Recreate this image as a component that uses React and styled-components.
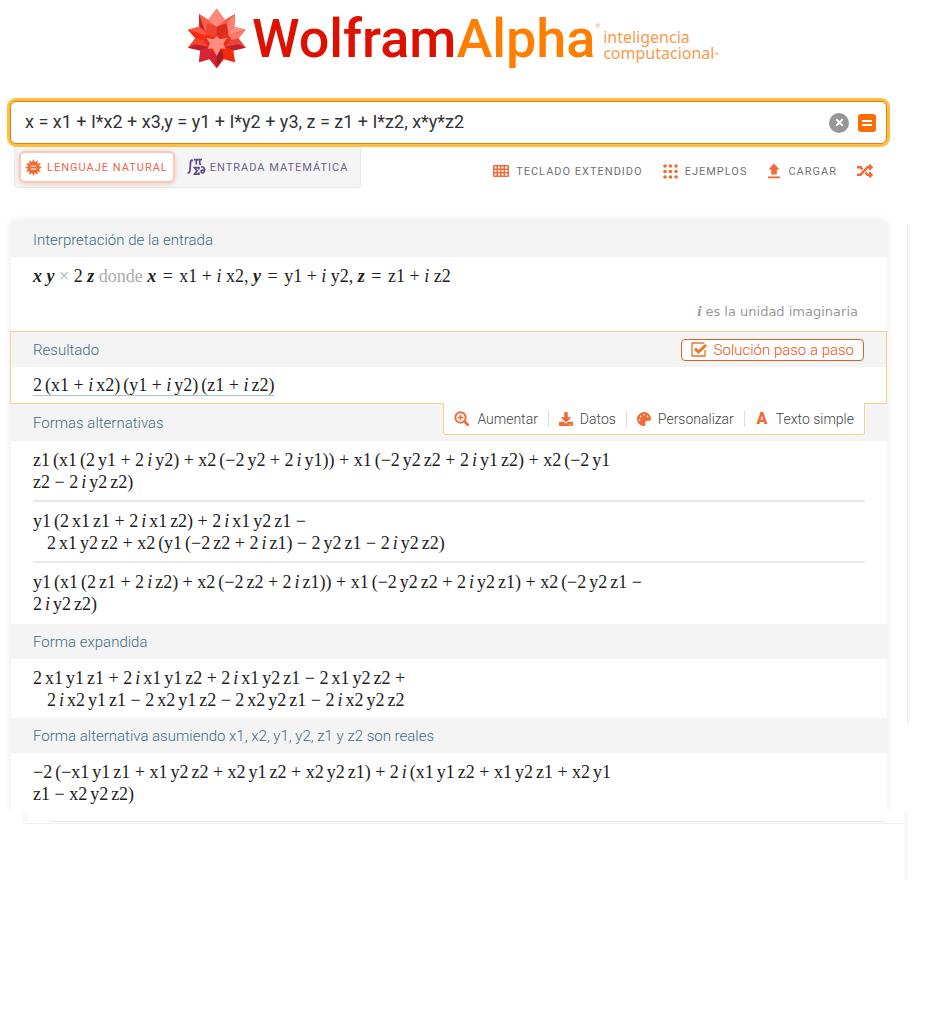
import React from "react";
import styled, { createGlobalStyle, css } from "styled-components";
import { FaRandom, FaDownload, FaPalette, FaTimes } from "react-icons/fa";

const orange = "#f26a35";
const sans = `Roboto, "Liberation Sans", sans-serif`;

const GlobalStyle = createGlobalStyle`
  *, *::before, *::after { box-sizing: border-box; }
  body { margin: 0; background: #fff; font-family: ${sans}; color: #333; }
  button { font: inherit; border: 0; background: none; padding: 0; cursor: pointer; }
`;

const Page = styled.div`
  display: flex;
  flex-direction: column;
  padding-top: 8px;
`;

const Brand = styled.a`
  display: flex;
  align-items: flex-start;
  align-self: center;
  height: 92px;
  margin-right: 26px;
  text-decoration: none;
`;

const Spikey = styled.svg`
  display: block;
  width: 60px;
  height: 62px;
  margin-right: 5px;
`;

const Wordmark = styled.span`
  font-size: 54px;
  line-height: 62px;
  font-weight: 500;
  color: #dd1100;
`;

const Alpha = styled.span`
  color: #ff7e00;
`;

const Mark = styled.small`
  font-size: 6px;
  font-weight: 400;
  line-height: 8px;
  color: #f79a4d;
  align-self: ${(p) => (p.$low ? "flex-end" : "flex-start")};
  margin: ${(p) => (p.$low ? "0 0 2px" : "14px 0 0")};
`;

const Tagline = styled.span`
  display: flex;
  margin: 21px 0 0 3px;
  font-family: "Noto Sans", "Open Sans", sans-serif;
  font-size: 16px;
  line-height: 16px;
  color: #f79a4d;
`;

const SearchBox = styled.form`
  position: relative;
  z-index: 1;
  display: flex;
  align-items: center;
  height: 43px;
  margin: 1px 45px 0 10px;
  padding: 0 10px 0 14px;
  gap: 9px;
  background: #fff;
  border: 1px solid #e07a20;
  border-radius: 6px;
  box-shadow: 0 0 0 3px #ffbf3a;
`;

const Query = styled.input`
  flex: 1;
  min-width: 0;
  padding: 0 0 2px;
  border: 0;
  outline: 0;
  background: none;
  font-family: ${sans};
  font-size: 18px;
  line-height: 24px;
  color: #333;
`;

const RoundButton = styled.button`
  display: grid;
  place-items: center;
  width: 20px;
  height: 20px;
  border-radius: 50%;
  background: #979797;
  color: #fff;
  font-size: 11px;
`;

const SubmitButton = styled(RoundButton)`
  width: 18px;
  height: 18px;
  border-radius: 3px;
  background: #ff6c00;
`;

const Controls = styled.div`
  display: flex;
  justify-content: space-between;
  align-items: flex-start;
  height: 78px;
  margin: 0 59px 0 14px;
`;

const Tabs = styled.div`
  display: flex;
  align-items: center;
  gap: 12px;
  height: 44px;
  padding: 3px 12px 0 4px;
  background: #f5f5f6;
  border: 1px solid #e8e8e8;
  border-top: 0;
  border-radius: 0 0 4px 4px;
`;

const Tab = styled.button`
  display: flex;
  align-items: center;
  gap: 4px;
  height: 32px;
  font-size: 11px;
  letter-spacing: 1px;
  color: #6c608f;
  white-space: nowrap;
  svg { display: block; }
  ${(p) =>
    p.$active &&
    css`
      gap: 5px;
      padding: 0 5px 0 4px;
      color: #ea6847;
      background: #fff;
      border: 2px solid #f9c9b9;
      border-radius: 6px;
      box-shadow: 0 1px 5px rgba(240, 120, 80, 0.35);
    `}
`;

const Tools = styled.div`
  display: flex;
  align-items: center;
  gap: 20px;
  height: 54px;
`;

const Tool = styled.button`
  display: flex;
  align-items: center;
  gap: 7px;
  font-size: 11px;
  letter-spacing: 1px;
  color: #737373;
  white-space: nowrap;
  svg { display: block; color: ${orange}; }
`;

const Results = styled.div`
  display: flex;
  align-items: flex-start;
`;

const Card = styled.main`
  flex: 1;
  min-width: 0;
  margin-left: 11px;
  border-radius: 5px 5px 0 0;
  background: #fff;
  box-shadow: 0 -2px 8px rgba(0, 0, 0, 0.09);
  clip-path: inset(-12px -9px 0 -9px);
`;

const Rail = styled.aside`
  width: 45px;
  padding: 3px 0 0 20px;
`;

const RailEdge = styled.div`
  width: 4px;
  height: 498px;
  border-left: 1px solid #ececec;
  background: linear-gradient(to right, #f5f5f5, #fff);
`;

const Pod = styled.section`
  position: relative;
  ${(p) =>
    p.$selected &&
    css`
      z-index: 1;
      margin-left: -1px;
      border: 1px solid #f3d58a;
    `}
`;

const PodHeader = styled.header`
  display: flex;
  align-items: center;
  justify-content: space-between;
  min-height: ${(p) => (p.$tall ? "37px" : "35px")};
  padding: 0 22px;
  background: #f4f4f4;
`;

const PodTitle = styled.h2`
  margin: 0;
  font-size: 15px;
  line-height: 20px;
  font-weight: 300;
  color: #3f6c82;
`;

const PodBody = styled.div`
  padding: 8px 22px 7px;
`;

const PodRows = styled.div`
  padding: 0 22px 2px;
`;

const Row = styled.div`
  padding: 8px 0 7px;
  & + & { border-top: 2px solid #e9e9e9; }
`;

const Formula = styled.p`
  width: fit-content;
  margin: 0;
  font-family: "Liberation Serif", "Times New Roman", serif;
  font-size: 18px;
  line-height: 22px;
  color: #1d1d1d;
  white-space: nowrap;
  ${(p) =>
    p.$linked &&
    css`
      line-height: 20px;
      border-bottom: 1px solid #a5c8cd;
    `}
`;

const Line = styled.span`
  display: block;
  padding-left: ${(p) => (p.$indent ? "14px" : "0")};
`;

const Variable = styled.i`
  font-weight: 700;
`;

const Relation = styled.span`
  padding: 0 2px;
`;

const Muted = styled.span`
  color: #aaa;
`;

const Note = styled.p`
  margin: 13px 7px 1px 0;
  font-family: "DejaVu Sans", sans-serif;
  font-size: 13px;
  line-height: 22px;
  text-align: right;
  color: #999;
  i { font-family: "Liberation Serif", serif; font-size: 15px; font-weight: 700; }
`;

const StepButton = styled.button`
  display: flex;
  align-items: center;
  gap: 6px;
  height: 22px;
  padding: 0 9px;
  border: 1px solid #d9622b;
  border-radius: 4px;
  background: #fff;
  font-size: 15px;
  font-weight: 300;
  line-height: 20px;
  color: #ee4f12;
  svg { display: block; }
`;

const PodMenu = styled.div`
  position: absolute;
  top: 100%;
  right: 21px;
  display: flex;
  height: 32px;
  align-items: center;
  background: #fff;
  border: 1px solid #f3d58a;
  border-top: 0;
  border-radius: 0 0 3px 3px;
`;

const MenuButton = styled.button`
  display: flex;
  align-items: center;
  gap: 7px;
  padding: 0 10px;
  font-size: 14px;
  font-weight: 300;
  line-height: 16px;
  color: #444;
  white-space: nowrap;
  & + & { border-left: 1px solid #dcdcdc; }
  svg { display: block; color: ${orange}; }
`;

const LetterIcon = styled.b`
  width: 14px;
  font-size: 16px;
  font-weight: 900;
  color: ${orange};
`;

const Tail = styled.div`
  height: 68px;
  margin: 0 21px 0 22px;
  padding-right: 7px;
  background: linear-gradient(to left, #fff, #f5f5f5 6px, #fff 7px);
`;

const TailEdge = styled.div`
  height: 12px;
  padding: 9px 20px 0 22px;
  background: #fff;
  border-left: 6px solid #fafafa;
  border-bottom: 1px solid #f1f1f1;
`;

const TailRule = styled.div`
  height: 1px;
  background: #e6e6e6;
`;

const TailBody = styled.div`
  height: 56px;
  background: #fff;
`;

// Factors are set with a narrow space, operators keep a full one.
function Expr({ children }) {
  return children
    .replace(/([^+−]) (?=[^+−])/g, "$1\u2006")
    .split(/(\bi\b)/)
    .map((part, n) => (part === "i" ? <i key={n}>i</i> : part));
}

const star = Array.from({ length: 24 }, (_, n) => {
  const r = n % 2 ? 6 : 9;
  const a = (n * Math.PI) / 12;
  return `${9 + r * Math.sin(a)},${9 - r * Math.cos(a)}`;
}).join(" ");

function SpikeyLogo() {
  return (
    <Spikey viewBox="42 22 180 186" aria-hidden="true">
      <polygon fill="#e8301c" points="131,24 156,58 186,40 184,78 218,87 196,113 218,141 180,147 186,185 153,176 131,203 109,176 78,185 82,147 45,141 67,113 45,87 79,78 78,40 106,58" />
      <polygon fill="#ff8a7c" points="131,24 158,62 131,79 104,62" />
      <polygon fill="#c9202c" points="78,40 79,80 97,94 100,70" />
      <polygon fill="#f8604c" points="78,40 106,58 131,79 104,70 97,94" />
      <polygon fill="#f8604c" points="186,40 156,58 131,79 162,70 165,94" />
      <polygon fill="#ff8171" points="186,40 184,78 166,94 162,68" />
      <polygon fill="#ee4433" points="104,68 131,79 131,109 96,101" />
      <polygon fill="#dc2b1c" points="158,68 131,79 131,109 166,101" />
      <polygon fill="#ff5a43" points="45,87 79,78 98,94 96,106" />
      <polygon fill="#f82c0c" points="45,87 96,103 86,120 67,113" />
      <polygon fill="#ff9184" points="218,87 184,78 166,94 166,103" />
      <polygon fill="#ff7868" points="218,87 166,103 178,122 196,113" />
      <polygon fill="#f24530" points="45,141 67,113 91,119 104,137 67,132" />
      <polygon fill="#bd1f2c" points="45,141 67,131 104,139 82,150" />
      <polygon fill="#ee4434" points="218,141 196,113 172,119 158,137 196,132" />
      <polygon fill="#bd1f2c" points="218,141 196,131 158,139 180,150" />
      <polygon fill="#d52536" points="78,185 82,147 108,139 115,172" />
      <polygon fill="#f52b0c" points="186,185 180,147 154,139 147,172" />
      <polygon fill="#d32331" points="131,203 111,169 115,145 131,165" />
      <polygon fill="#a81a27" points="131,203 151,169 147,145 131,165" />
      <polygon fill="#ff8d7f" points="100,112 122,116 131,106 140,116 163,112 151,128 158,145 143,143 131,166 119,143 104,145 111,128" />
    </Spikey>
  );
}

function SunIcon() {
  return (
    <svg width="17" height="17" viewBox="0 0 18 18" aria-hidden="true">
      <polygon points={star} fill={orange} />
      <path d="M6 7.500h6M6 10.500h6" stroke="#ffd9c8" strokeWidth="1.500" />
    </svg>
  );
}

function MathIcon() {
  return (
    <svg width="19" height="18" viewBox="0 0 19 18" fill="none" stroke="#5e4a8c" aria-hidden="true">
      <path d="M6 2.600C4.200 1.600 3.600 3 3.500 5L3 12c-.1 2.400-1 3.400-2.500 2.500" strokeWidth="1.800" />
      <path d="M7 1.700h8M9.300 2v4.500M12.700 2v3.500q0 1 1.500.8" strokeWidth="1.700" />
      <path d="M12 11.500V9.700H7.500l2.500 3-2.500 3.500H12v-1.800" strokeWidth="1.700" />
      <path d="M14 9.300c3-1 4 1.500 3.500 3.700-.5 2.500-3.500 2.500-3.500.6 0-2 2.500-2 3.700-.8" strokeWidth="1.600" />
    </svg>
  );
}

function GridIcon() {
  return (
    <svg width="16" height="12" viewBox="0 0 16 12" aria-hidden="true">
      <rect width="16" height="12" rx="1" fill="currentColor" />
      <path fill="#fff" d="M1.500 1.500h2v2h-2zM5 1.500h2v2H5zM8.500 1.500h2v2h-2zM12 1.500h2.500v2H12zM1.500 5h2v2h-2zM5 5h2v2H5zM8.500 5h2v2h-2zM12 5h2.500v2H12zM1.500 8.500h2v2h-2zM5 8.500h2v2H5zM8.500 8.500h2v2h-2zM12 8.500h2.500v2H12z" />
    </svg>
  );
}

function DotsIcon() {
  return (
    <svg width="15" height="15" viewBox="0 0 15 15" fill="currentColor" aria-hidden="true">
      {[2, 7.5, 13].map((y) => [2, 7.5, 13].map((x) => <circle key={`${x}-${y}`} cx={x} cy={y} r="1.800" />))}
    </svg>
  );
}

function UploadIcon() {
  return (
    <svg width="14" height="16" viewBox="0 0 14 16" fill="currentColor" aria-hidden="true">
      <path d="M7 0.500 12.500 6.500H9.800V11.500H4.200V6.500H1.500zM1 13.500h12v1.800H1z" />
    </svg>
  );
}

function ZoomIcon() {
  return (
    <svg width="16" height="16" viewBox="0 0 16 16" fill="none" stroke="currentColor" aria-hidden="true">
      <circle cx="6.500" cy="6.500" r="5.200" strokeWidth="1.900" />
      <path d="M6.500 3.800v5.400M3.800 6.500h5.400" strokeWidth="1.500" />
      <path d="m10.500 10.500 4 4" strokeWidth="2.800" />
    </svg>
  );
}

function CheckIcon() {
  return (
    <svg width="17" height="15" viewBox="0 0 17 15" fill="none" aria-hidden="true">
      <path d="M14 8v6H1V1h12.500" stroke="#e8762c" strokeWidth="1.300" />
      <path d="m4 6.500 3.500 3.500L15 3" stroke="#f47321" strokeWidth="2.800" />
    </svg>
  );
}

function EqualsIcon() {
  return (
    <svg width="12" height="10" viewBox="0 0 12 10" aria-hidden="true">
      <path d="M1 3h10M1 7h10" stroke="#fff" strokeWidth="2" />
    </svg>
  );
}

function Definition({ name }) {
  return (
    <>
      <Variable>{name}</Variable>
      <Relation> = </Relation>
      {name}1 + <i>i</i> {name}2
    </>
  );
}

export default function App() {
  return (
    <>
      <GlobalStyle />
      <Page>
        <Brand href="#">
          <SpikeyLogo />
          <Wordmark>Wolfram<Alpha>Alpha</Alpha></Wordmark>
          <Mark>®</Mark>
          <Tagline>
            <span>inteligencia<br />computacional</span>
            <Mark $low>™</Mark>
          </Tagline>
        </Brand>

        <SearchBox onSubmit={(e) => e.preventDefault()}>
          <Query aria-label="Entrada" defaultValue="x = x1 + I*x2 + x3,y = y1 + I*y2 + y3, z = z1 + I*z2, x*y*z2" />
          <RoundButton type="button" aria-label="Borrar"><FaTimes /></RoundButton>
          <SubmitButton type="submit" aria-label="Calcular"><EqualsIcon /></SubmitButton>
        </SearchBox>

        <Controls>
          <Tabs>
            <Tab $active><SunIcon />LENGUAJE NATURAL</Tab>
            <Tab><MathIcon />ENTRADA MATEMÁTICA</Tab>
          </Tabs>
          <Tools>
            <Tool><GridIcon />TECLADO EXTENDIDO</Tool>
            <Tool><DotsIcon />EJEMPLOS</Tool>
            <Tool><UploadIcon />CARGAR</Tool>
            <Tool aria-label="Aleatorio"><FaRandom size={16} /></Tool>
          </Tools>
        </Controls>

        <Results>
          <Card>
            <Pod>
              <PodHeader><PodTitle>Interpretación de la entrada</PodTitle></PodHeader>
              <PodBody>
                <Formula>
                  <Variable>x y</Variable> <Muted>×</Muted> 2 <Variable>z</Variable> <Muted>donde</Muted>{" "}
                  <Definition name="x" />, <Definition name="y" />, <Definition name="z" />
                </Formula>
                <Note><i>i</i> es la unidad imaginaria</Note>
              </PodBody>
            </Pod>

            <Pod $selected>
              <PodHeader>
                <PodTitle>Resultado</PodTitle>
                <StepButton><CheckIcon />Solución paso a paso</StepButton>
              </PodHeader>
              <PodBody>
                <Formula $linked><Expr>2 (x1 + i x2) (y1 + i y2) (z1 + i z2)</Expr></Formula>
              </PodBody>
              <PodMenu>
                <MenuButton><ZoomIcon />Aumentar</MenuButton>
                <MenuButton><FaDownload size={14} />Datos</MenuButton>
                <MenuButton><FaPalette size={14} />Personalizar</MenuButton>
                <MenuButton><LetterIcon aria-hidden="true">A</LetterIcon>Texto simple</MenuButton>
              </PodMenu>
            </Pod>

            <Pod>
              <PodHeader $tall><PodTitle>Formas alternativas</PodTitle></PodHeader>
              <PodRows>
                <Row>
                  <Formula>
                    <Line><Expr>z1 (x1 (2 y1 + 2 i y2) + x2 (−2 y2 + 2 i y1)) + x1 (−2 y2 z2 + 2 i y1 z2) + x2 (−2 y1</Expr></Line>
                    <Line><Expr>z2 − 2 i y2 z2)</Expr></Line>
                  </Formula>
                </Row>
                <Row>
                  <Formula>
                    <Line><Expr>y1 (2 x1 z1 + 2 i x1 z2) + 2 i x1 y2 z1 −</Expr></Line>
                    <Line $indent><Expr>2 x1 y2 z2 + x2 (y1 (−2 z2 + 2 i z1) − 2 y2 z1 − 2 i y2 z2)</Expr></Line>
                  </Formula>
                </Row>
                <Row>
                  <Formula>
                    <Line><Expr>y1 (x1 (2 z1 + 2 i z2) + x2 (−2 z2 + 2 i z1)) + x1 (−2 y2 z2 + 2 i y2 z1) + x2 (−2 y2 z1 −</Expr></Line>
                    <Line><Expr>2 i y2 z2)</Expr></Line>
                  </Formula>
                </Row>
              </PodRows>
            </Pod>

            <Pod>
              <PodHeader><PodTitle>Forma expandida</PodTitle></PodHeader>
              <PodBody>
                <Formula>
                  <Line><Expr>2 x1 y1 z1 + 2 i x1 y1 z2 + 2 i x1 y2 z1 − 2 x1 y2 z2 +</Expr></Line>
                  <Line $indent><Expr>2 i x2 y1 z1 − 2 x2 y1 z2 − 2 x2 y2 z1 − 2 i x2 y2 z2</Expr></Line>
                </Formula>
              </PodBody>
            </Pod>

            <Pod>
              <PodHeader><PodTitle>Forma alternativa asumiendo x1, x2, y1, y2, z1 y z2 son reales</PodTitle></PodHeader>
              <PodBody>
                <Formula>
                  <Line><Expr>−2 (−x1 y1 z1 + x1 y2 z2 + x2 y1 z2 + x2 y2 z1) + 2 i (x1 y1 z2 + x1 y2 z1 + x2 y1</Expr></Line>
                  <Line><Expr>z1 − x2 y2 z2)</Expr></Line>
                </Formula>
              </PodBody>
            </Pod>
          </Card>
          <Rail><RailEdge /></Rail>
        </Results>

        <Tail>
          <TailEdge><TailRule /></TailEdge>
          <TailBody />
        </Tail>
      </Page>
    </>
  );
}
